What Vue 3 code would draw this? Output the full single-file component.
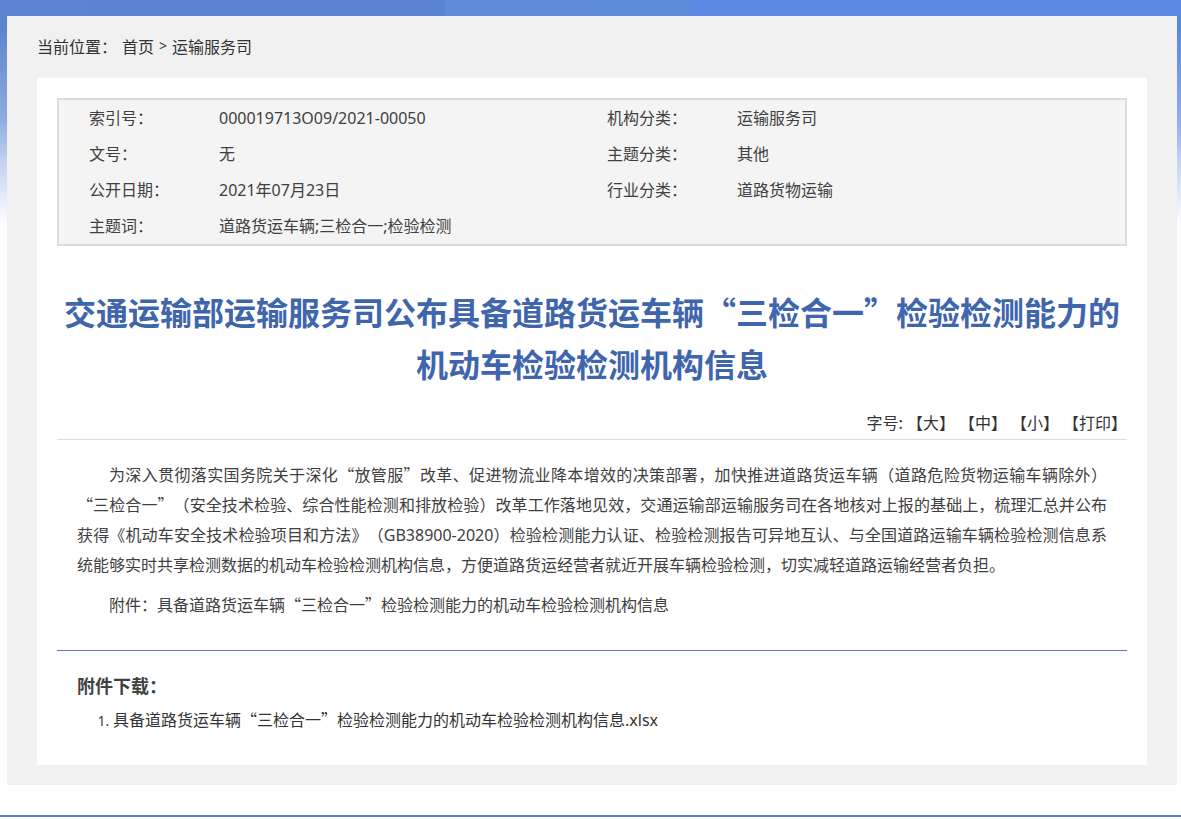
<script setup>
import { ref } from 'vue'

const rows = [
  [['索引号：', '000019713O09/2021-00050'], ['机构分类：', '运输服务司']],
  [['文号：', '无'], ['主题分类：', '其他']],
  [['公开日期：', '2021年07月23日'], ['行业分类：', '道路货物运输']],
  [['主题词：', '道路货运车辆;三检合一;检验检测'], ['', '']],
]

const sizes = [
  { label: '【大】', value: 'large' },
  { label: '【中】', value: 'medium' },
  { label: '【小】', value: 'small' },
]
const size = ref('medium')

function printPage() {
  window.print()
}
</script>

<template>
  <div class="page" lang="zh-CN">
    <div class="sheet">
      <nav class="crumbs" aria-label="当前位置">
        <span>当前位置：</span>
        <a href="#">首页</a>
        <span class="sep">&gt;</span>
        <a href="#">运输服务司</a>
      </nav>

      <main class="card">
        <table class="meta">
          <colgroup>
            <col class="col-first" />
            <col />
            <col class="col-label" />
            <col />
          </colgroup>
          <tbody>
            <tr v-for="(row, i) in rows" :key="i">
              <template v-for="(pair, j) in row" :key="j">
                <th v-if="pair[0]" scope="row">{{ pair[0] }}</th>
                <td v-else></td>
                <td>{{ pair[1] }}</td>
              </template>
            </tr>
          </tbody>
        </table>

        <h1>交通运输部运输服务司公布具备道路货运车辆“三检合一”检验检测能力的机动车检验检测机构信息</h1>

        <div class="tools">
          <span>字号:</span>
          <button v-for="s in sizes" :key="s.value" type="button" @click="size = s.value">{{ s.label }}</button>
          <button type="button" @click="printPage">【打印】</button>
        </div>

        <article :class="['text', size]">
          <p>为深入贯彻落实国务院关于深化“放管服”改革、促进物流业降本增效的决策部署，加快推进道路货运车辆（道路危险货物运输车辆除外）“三检合一”（安全技术检验、综合性能检测和排放检验）改革工作落地见效，交通运输部运输服务司在各地核对上报的基础上，梳理汇总并公布获得《机动车安全技术检验项目和方法》（<span class="latin">GB38900-2020</span>）检验检测能力认证、检验检测报告可异地互认、与全国道路运输车辆检验检测信息系统能够实时共享检测数据的机动车检验检测机构信息，方便道路货运经营者就近开展车辆检验检测，切实减轻道路运输经营者负担。</p>
          <p>附件：具备道路货运车辆“三检合一”检验检测能力的机动车检验检测机构信息</p>
        </article>

        <section class="files">
          <h2>附件下载：</h2>
          <ol>
            <li><a href="#">具备道路货运车辆“三检合一”检验检测能力的机动车检验检测机构信息<span class="latin">.xlsx</span></a></li>
          </ol>
        </section>
      </main>
    </div>
    <footer class="rule"></footer>
  </div>
</template>

<style>
body {
  margin: 0;
  background: #fff;
}
</style>

<style scoped>
.page {
  display: flow-root;
  font-family: "Noto Sans CJK SC", sans-serif;
  font-size: 16px;
  line-height: 36px;
  color: #404040;
  text-spacing-trim: space-all;
  background:
    linear-gradient(to bottom, rgba(255, 255, 255, 0) 30px, rgba(255, 255, 255, 0.32) 120px, rgba(255, 255, 255, 0.65) 165px, #fff 225px),
    linear-gradient(to right, #5b85d1 0, #5b84d0 444px, #5f8bda 446px, #5f8bdb 680px, #5b88e2 700px, #5b88e2 100%);
}
a {
  color: #333;
  text-decoration: none;
}
.latin {
  font-family: "Noto Sans", sans-serif;
  line-height: 1;
}
.sheet {
  margin: 16px 4px 30px 7px;
  padding: 0 30px 20px;
  background: #f1f1f1;
}
.crumbs {
  display: flex;
  gap: 5px;
  padding-bottom: 2px;
  line-height: 60px;
  color: #333;
}
.sep {
  font-family: "Noto Sans", sans-serif;
  font-size: 14px;
}
.card {
  padding: 20px 20px 29px;
  background: #fff;
}
.meta {
  width: 100%;
  table-layout: fixed;
  border: 2px solid #dcdcdc;
  border-spacing: 0;
  background: #f4f4f4;
}
.col-first {
  width: 160px;
}
.col-label {
  width: 130px;
}
.meta th,
.meta td {
  height: 36px;
  padding: 0;
  font-family: "Noto Sans", "Noto Sans CJK SC", sans-serif;
  font-weight: 400;
  text-align: left;
}
.meta th:first-child {
  padding-left: 30px;
}
h1 {
  margin: 39px 0 16px;
  font-size: 32px;
  font-weight: 700;
  line-height: 52px;
  text-align: center;
  color: #3f66ad;
}
.tools {
  display: flex;
  justify-content: flex-end;
  gap: 4px;
  border-bottom: 1px solid #dcdcdc;
  line-height: 34px;
  color: #333;
}
.tools button {
  padding: 0;
  border: 0;
  background: none;
  font: inherit;
  color: inherit;
  cursor: pointer;
}
.text {
  padding: 19px 20px 31px;
  line-height: 30px;
  text-align: justify;
}
.text p {
  margin: 0 0 10px;
  text-indent: 32px;
}
.text p:last-child {
  margin: 0;
}
.text.large {
  font-size: 18px;
}
.text.small {
  font-size: 14px;
}
.files {
  padding: 16px 20px 0;
  border-top: 1px solid #5b7dc8;
}
h2 {
  margin: 0;
  font-size: 18px;
  font-weight: 700;
}
ol {
  margin: 0;
  padding-left: 36px;
  line-height: 33px;
}
li::marker {
  font-family: "Noto Sans", sans-serif;
  font-size: 14px;
}
.rule {
  height: 2px;
  background: #6080cc;
}
</style>
